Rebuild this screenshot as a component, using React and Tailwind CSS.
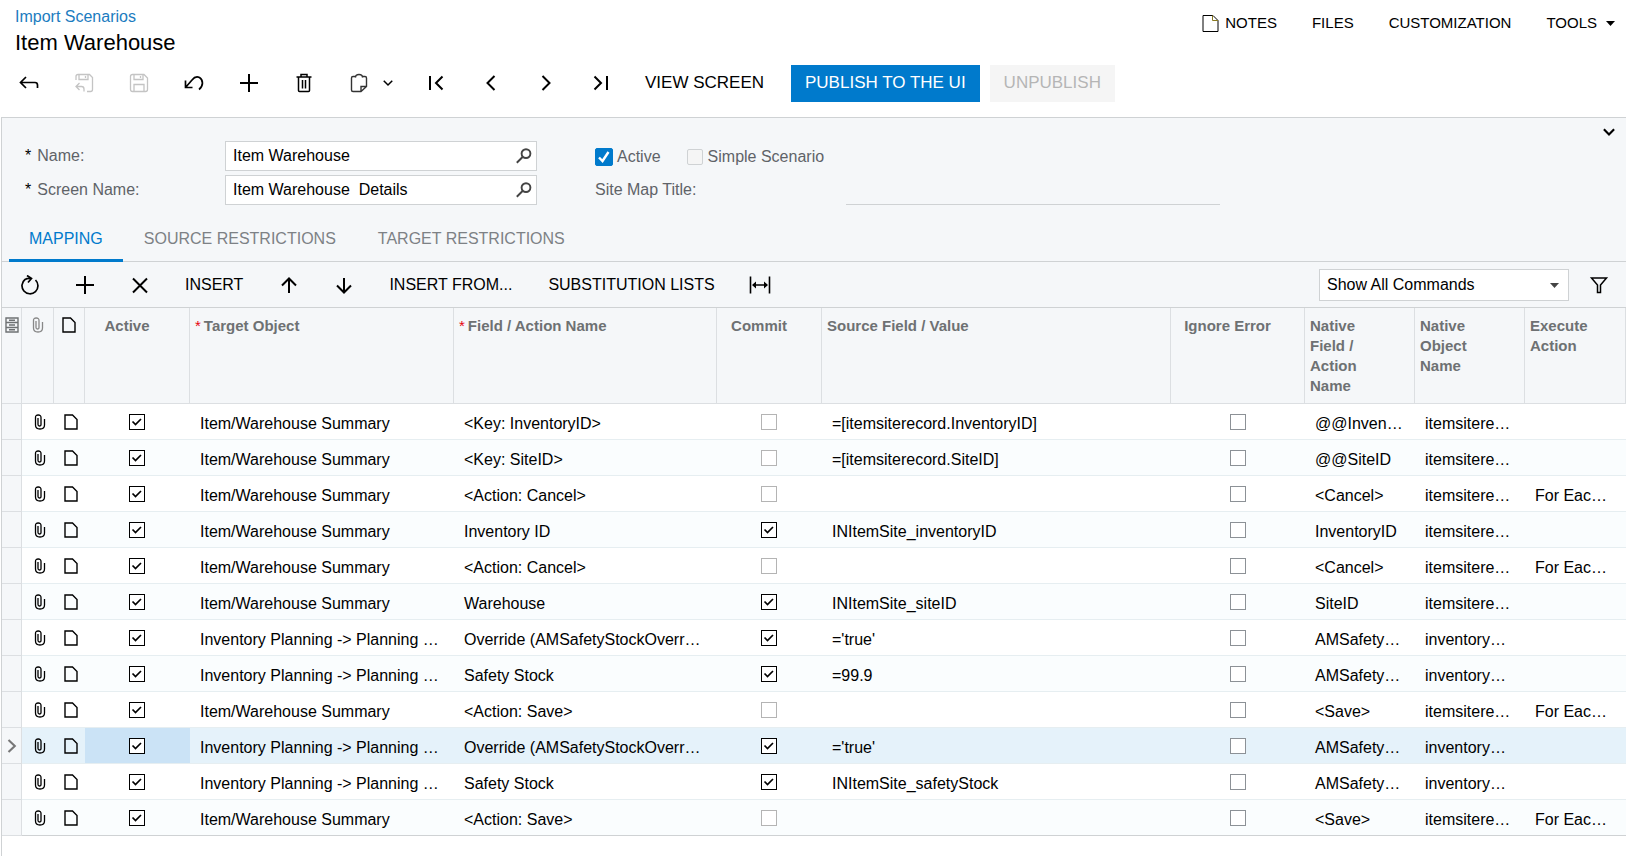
import React from 'react';

const columns = [
  { title: 'Target Object', required: true, width: 'w-[264px]' },
  { title: 'Field / Action Name', required: true, width: 'w-[263px]' },
  { title: 'Commit', center: true, width: 'w-[105px]' },
  { title: 'Source Field / Value', width: '' },
  { title: 'Ignore Error', center: true, width: 'w-[134px]' },
  { title: 'Native Field / Action Name', width: 'w-[110px]' },
  { title: 'Native Object Name', width: 'w-[110px]' },
  { title: 'Execute Action', width: 'w-[101px]' },
];

const summary = 'Item/Warehouse Summary';
const planning = 'Inventory Planning -> Planning …';
const override = 'Override (AMSafetyStockOverr…';

const rows = [
  { target: summary, field: '<Key: InventoryID>', source: '=[itemsiterecord.InventoryID]', native: '@@Inven…', object: 'itemsitere…' },
  { target: summary, field: '<Key: SiteID>', source: '=[itemsiterecord.SiteID]', native: '@@SiteID', object: 'itemsitere…' },
  { target: summary, field: '<Action: Cancel>', native: '<Cancel>', object: 'itemsitere…', execute: 'For Eac…' },
  { target: summary, field: 'Inventory ID', commit: true, source: 'INItemSite_inventoryID', native: 'InventoryID', object: 'itemsitere…' },
  { target: summary, field: '<Action: Cancel>', native: '<Cancel>', object: 'itemsitere…', execute: 'For Eac…' },
  { target: summary, field: 'Warehouse', commit: true, source: 'INItemSite_siteID', native: 'SiteID', object: 'itemsitere…' },
  { target: planning, field: override, commit: true, source: "='true'", native: 'AMSafety…', object: 'inventory…' },
  { target: planning, field: 'Safety Stock', commit: true, source: '=99.9', native: 'AMSafety…', object: 'inventory…' },
  { target: summary, field: '<Action: Save>', native: '<Save>', object: 'itemsitere…', execute: 'For Eac…' },
  { target: planning, field: override, commit: true, source: "='true'", native: 'AMSafety…', object: 'inventory…', selected: true },
  { target: planning, field: 'Safety Stock', commit: true, source: 'INItemSite_safetyStock', native: 'AMSafety…', object: 'inventory…' },
  { target: summary, field: '<Action: Save>', native: '<Save>', object: 'itemsitere…', execute: 'For Eac…' },
];

const Icon = ({ size = 20, stroke = 2, className = '', children }) => (
  <svg
    width={size}
    height={size}
    viewBox="0 0 20 20"
    fill="none"
    stroke="currentColor"
    strokeWidth={stroke}
    className={`shrink-0 ${className}`}
    aria-hidden="true"
  >
    {children}
  </svg>
);

const BackIcon = () => (
  <Icon stroke={1.7}>
    <path d="M7 4 1.5 9.5 7 15M1.5 9.5H16Q18.5 9.5 18.5 12V15" />
  </Icon>
);

const SaveBackIcon = () => (
  <Icon stroke={1.3}>
    <path d="M2 7V3.5Q2 1.5 4 1.5H15.5L18.5 4.5V16.5Q18.5 18.5 16.5 18.5H13M5 1.5V6.5H14V1.5M11.5 3V5" />
    <path d="M5.5 10 2 13.5 5.5 17M2 13.5H7.5Q10 13.5 10 16V18.5" />
  </Icon>
);

const SaveIcon = () => (
  <Icon stroke={1.3}>
    <path d="M1.5 3.5Q1.5 1.5 3.5 1.5H15L18.5 5V16.5Q18.5 18.5 16.5 18.5H3.5Q1.5 18.5 1.5 16.5ZM5 1.5V6.5H14V1.5M11.5 3V5M5 18.5V11.5H15V18.5" />
  </Icon>
);

const UndoIcon = () => (
  <Icon stroke={1.7}>
    <path d="M1.5 7.5V14.5H8.5M1.5 14.5 8 7Q11.5 2.5 15.5 4.5C19.5 7 19.5 13 15 16.5" />
  </Icon>
);

const PlusIcon = () => (
  <Icon>
    <path d="M10 1V19M1 10H19" />
  </Icon>
);

const TrashIcon = () => (
  <Icon stroke={1.5}>
    <path d="M2.5 4H17.5M7 4V1.5H13V4M4.5 4V17.5Q4.5 18.5 5.5 18.5H14.5Q15.5 18.5 15.5 17.5V4M8.5 7V15.5M11.5 7V15.5" />
  </Icon>
);

const ClipboardIcon = () => (
  <Icon stroke={1.4} className="text-[#333333]">
    <path d="M6.5 3.5H4Q2.5 3.5 2.5 5V17Q2.5 18.5 4 18.5H12L17.5 13.5V5Q17.5 3.5 16 3.5H13.5M12 18.5V13.5H17.5" />
    <path d="M6.5 4.5Q6.5 1.5 10 1.5T13.5 4.5" />
  </Icon>
);

const DownIcon = ({ size = 10, stroke = 3.6 }) => (
  <Icon size={size} stroke={stroke}>
    <path d="M1.5 5.5 10 14 18.5 5.5" />
  </Icon>
);

const FirstIcon = () => (
  <Icon>
    <path d="M4 3V17M16.5 3.5 10 10 16.5 16.5" />
  </Icon>
);

const PrevIcon = () => (
  <Icon>
    <path d="M13.5 3 6.5 10 13.5 17" />
  </Icon>
);

const NextIcon = () => (
  <Icon>
    <path d="M6.5 3 13.5 10 6.5 17" />
  </Icon>
);

const LastIcon = () => (
  <Icon>
    <path d="M3.5 3.5 10 10 3.5 16.5M16 3V17" />
  </Icon>
);

const RefreshIcon = () => (
  <Icon stroke={1.7}>
    <path d="M15.5 5A8 8 0 1 1 5 4.5Q7.500 3 11 3.5M7 0.5 11.500 3.5 8 7.5" />
  </Icon>
);

const CloseIcon = () => (
  <Icon>
    <path d="M3 3.5 17 17.5M17 3.5 3 17.5" />
  </Icon>
);

const UpIcon = () => (
  <Icon>
    <path d="M10 18V3.5M3 10.5 10 3.5 17 10.5" />
  </Icon>
);

const ArrowDownIcon = () => (
  <Icon>
    <path d="M10 3V17.5M3 10.5 10 17.5 17 10.5" />
  </Icon>
);

const FitIcon = () => (
  <svg width="22" height="20" viewBox="0 0 22 20" fill="none" stroke="currentColor" strokeWidth="1.6" aria-hidden="true">
    <path d="M1.5 1.5V18.5M20.5 1.5V18.5M4 10H18" />
    <path d="M3 10 7 6.5V13.5ZM19 10 15 6.5V13.5Z" fill="currentColor" stroke="none" />
  </svg>
);

const FilterIcon = () => (
  <Icon stroke={1.5}>
    <path d="M2.5 3H17.5L11.5 10V17.5H8.5V10Z" />
  </Icon>
);

const SearchIcon = () => (
  <Icon size={16} stroke={2.4}>
    <circle cx="12.5" cy="7" r="5.5" />
    <path d="M8.5 11 1 18.5" />
  </Icon>
);

const ClipIcon = ({ className }) => (
  <svg width="12" height="16" viewBox="0 0 12 16" fill="none" stroke="currentColor" strokeWidth="1.3" className={className} aria-hidden="true">
    <path d="M4 4V10.5Q4 12 5.5 12T7 10.5V3.5Q7 1 4.2 1T1.5 3.5V11Q1.5 15 6 15T10.5 11V5" />
  </svg>
);

const NoteIcon = () => (
  <svg width="14" height="16" viewBox="0 0 14 16" fill="none" stroke="currentColor" strokeWidth="1.4" aria-hidden="true">
    <path d="M1 1H8.5L13 5.5V15H1Z" />
  </svg>
);

const PageIcon = () => (
  <svg width="17" height="19" viewBox="0 0 17 19" fill="none" stroke="currentColor" strokeWidth="1" aria-hidden="true">
    <path d="M1 1.5H11L16 6.5V17.5H1Z" />
    <path d="M10.5 1.5V6.5H16" stroke="#8a7a20" />
  </svg>
);

const RowSettingsIcon = () => (
  <svg width="14" height="16" viewBox="0 0 14 16" fill="none" stroke="currentColor" strokeWidth="1.4" aria-hidden="true">
    <path d="M1 1H13V15H1ZM1 5.500H13M1 10.500H13M4 3.200H10M4 8H10M4 12.800H10" />
  </svg>
);

const IconButton = ({ label, disabled, children }) => (
  <button
    type="button"
    aria-label={label}
    disabled={disabled}
    className="flex h-9 w-[55px] items-center justify-center disabled:text-[#c4c4c4]"
  >
    {children}
  </button>
);

const TextButton = ({ children }) => (
  <button type="button" className="h-9 px-[18px] text-base whitespace-nowrap">
    {children}
  </button>
);

const GridCheck = ({ label, checked, light }) => (
  <span className="relative mx-auto block size-4">
    <input
      type="checkbox"
      aria-label={label}
      defaultChecked={checked}
      className={`peer block size-4 appearance-none border bg-white checked:border-black ${
        light ? 'border-[#b4b4b4]' : 'border-[#8c9196]'
      }`}
    />
    <svg
      viewBox="0 0 16 16"
      className="pointer-events-none absolute inset-0 hidden size-4 peer-checked:block"
      fill="none"
      stroke="black"
      strokeWidth="1.7"
      aria-hidden="true"
    >
      <path d="M3.5 7.5 6.5 10.5 12 5" />
    </svg>
  </span>
);

const LookupField = ({ id, label, value }) => (
  <div className="flex items-center">
    <label htmlFor={id} className="flex w-[200px] gap-[6px] text-[#5f6368]">
      <span className="text-black">*</span>
      {label}
    </label>
    <div className="flex h-[30px] w-[312px] items-center border border-[#cfd2d4] bg-white pr-1">
      <input id={id} defaultValue={value} className="h-full min-w-0 flex-1 px-[7px] outline-none" />
      <button type="button" aria-label={`Find ${label}`} className="text-[#444444]">
        <SearchIcon />
      </button>
    </div>
  </div>
);

const Header = () => (
  <header className="pb-[15px]">
    <div className="flex justify-between pt-[5px] pr-[11px] pl-[15px]">
      <div>
        <a href="#" className="block text-base leading-6 text-[#1b7cc0]">
          Import Scenarios
        </a>
        <h1 className="text-[22px] leading-7">Item Warehouse</h1>
      </div>
      <nav className="flex h-9 items-center gap-[35px] text-[15px]">
        <a href="#" className="flex items-center gap-[6px]">
          <PageIcon />
          NOTES
        </a>
        <a href="#">FILES</a>
        <a href="#">CUSTOMIZATION</a>
        <button type="button" className="flex items-center gap-[9px]">
          TOOLS
          <svg width="9" height="5" viewBox="0 0 9 5" aria-hidden="true">
            <path d="M0 0H9L4.5 5Z" />
          </svg>
        </button>
      </nav>
    </div>
    <div className="flex items-start pt-2 pl-px">
      <IconButton label="Back"><BackIcon /></IconButton>
      <IconButton label="Save and close" disabled><SaveBackIcon /></IconButton>
      <IconButton label="Save" disabled><SaveIcon /></IconButton>
      <IconButton label="Undo"><UndoIcon /></IconButton>
      <IconButton label="Add"><PlusIcon /></IconButton>
      <IconButton label="Delete"><TrashIcon /></IconButton>
      <button type="button" aria-label="Clipboard" className="flex h-9 w-[77px] items-center gap-[14px] pl-[18px]">
        <ClipboardIcon />
        <DownIcon stroke={3} />
      </button>
      <IconButton label="First"><FirstIcon /></IconButton>
      <IconButton label="Previous"><PrevIcon /></IconButton>
      <IconButton label="Next"><NextIcon /></IconButton>
      <IconButton label="Last"><LastIcon /></IconButton>
      <div className="flex gap-[10px] text-[17px]">
        <button type="button" className="h-[37px] w-[153px] pb-[2px]">VIEW SCREEN</button>
        <button type="button" className="h-[37px] bg-[#007acc] px-[14px] pb-[2px] text-white">PUBLISH TO THE UI</button>
        <button type="button" disabled className="h-[37px] bg-[#f5f5f5] px-[14px] pb-[2px] text-[#b5b5b5]">UNPUBLISH</button>
      </div>
    </div>
  </header>
);

const Summary = () => (
  <section className="relative flex gap-[58px] pt-[23px] pl-[23px]">
    <div className="flex flex-col gap-1">
      <LookupField id="name" label="Name:" value="Item Warehouse" />
      <LookupField id="screen" label="Screen Name:" value="Item Warehouse  Details" />
    </div>
    <div className="flex flex-col gap-1 text-[#5f6368]">
      <div className="flex h-[30px] items-center gap-[26px] pt-px">
        <label className="flex items-center gap-1">
          <span className="relative size-[18px]">
            <input type="checkbox" defaultChecked className="peer block size-[18px] appearance-none rounded-xs border border-[#cfd2d4] bg-white checked:border-[#007acc] checked:bg-[#007acc]" />
            <svg viewBox="0 0 18 18" className="pointer-events-none absolute inset-0 hidden size-[18px] peer-checked:block" fill="none" stroke="white" strokeWidth="2.4" aria-hidden="true">
              <path d="M4 9.5 7.5 13 13.5 4" />
            </svg>
          </span>
          Active
        </label>
        <label className="flex items-center gap-[5px]">
          <input type="checkbox" disabled className="size-4 appearance-none rounded-xs border border-[#cfd2d4] bg-[#f5f5f5]" />
          Simple Scenario
        </label>
      </div>
      <div className="flex h-[30px] items-center">
        <label htmlFor="site-map" className="w-[251px]">Site Map Title:</label>
        <input id="site-map" className="h-full w-[374px] border-b border-[#cfd2d4] bg-transparent outline-none" />
      </div>
    </div>
    <button type="button" aria-label="Collapse" className="absolute top-2 right-[11px]">
      <DownIcon size={12} />
    </button>
  </section>
);

const Tabs = () => (
  <div role="tablist" className="mt-[9px] flex h-12 border-b border-[#cfd2d4] pl-[7px] text-[#7d8185]">
    <button type="button" role="tab" aria-selected="true" className="-mb-px border-b-3 border-[#007acc] px-5 pt-1 text-[#007acc]">
      MAPPING
    </button>
    <button type="button" role="tab" aria-selected="false" className="px-[21px] pt-[2px]">SOURCE RESTRICTIONS</button>
    <button type="button" role="tab" aria-selected="false" className="px-[21px] pt-[2px]">TARGET RESTRICTIONS</button>
  </div>
);

const GridToolbar = () => (
  <div className="flex h-[46px] items-center border-b border-[#cfd2d4]">
    <IconButton label="Refresh"><RefreshIcon /></IconButton>
    <IconButton label="Add row"><PlusIcon /></IconButton>
    <IconButton label="Delete row"><CloseIcon /></IconButton>
    <TextButton>INSERT</TextButton>
    <IconButton label="Move up"><UpIcon /></IconButton>
    <IconButton label="Move down"><ArrowDownIcon /></IconButton>
    <TextButton>INSERT FROM...</TextButton>
    <TextButton>SUBSTITUTION LISTS</TextButton>
    <IconButton label="Fit to screen"><FitIcon /></IconButton>
    <div className="relative mr-[2px] ml-auto">
      <select aria-label="Commands" className="h-8 w-[250px] appearance-none border border-[#cfd2d4] bg-white px-[7px] outline-none">
        <option>Show All Commands</option>
      </select>
      <svg width="9" height="5" viewBox="0 0 9 5" className="pointer-events-none absolute top-[14px] right-[10px]" fill="#444444" aria-hidden="true">
        <path d="M0 0H9L4.5 5Z" />
      </svg>
    </div>
    <IconButton label="Filter"><FilterIcon /></IconButton>
  </div>
);

const headCell = 'h-24 border-r border-b border-[#dcdfe2] pt-2 align-top';
const cell = 'h-9 border-b border-[#e6eef1] group-last:border-[#cfd2d4]';
const textCell = `${cell} truncate pt-[5px] pl-[10px]`;

const Grid = () => (
  <table className="w-full table-fixed border-separate border-spacing-0">
    <thead className="text-left text-[15px] leading-5 font-bold text-[#6e7173]">
      <tr>
        <th className={`${headCell} w-5`}>
          <span className="flex justify-center pt-px"><RowSettingsIcon /></span>
        </th>
        <th className={`${headCell} w-8`}>
          <span className="flex justify-center pt-px"><ClipIcon className="text-[#888888]" /></span>
        </th>
        <th className={`${headCell} w-[31px]`}>
          <span className="flex justify-center pt-px text-black"><NoteIcon /></span>
        </th>
        <th className={`${headCell} w-[105px] pr-5 text-center`}>Active</th>
        {columns.map((col) => (
          <th key={col.title} className={`${headCell} ${col.width} ${col.center ? 'pr-5 text-center' : 'pr-6 pl-[5px]'}`}>
            {col.required && <span className="mr-[3px] font-normal text-red-600">*</span>}
            {col.title}
          </th>
        ))}
      </tr>
    </thead>
    <tbody className="text-base">
      {rows.map((row, i) => (
        <tr key={i} className={`group ${row.selected ? 'bg-[#e5f2fa]' : i % 2 ? 'bg-[#fafdfe]' : 'bg-white'}`}>
          <td className="h-9 border-r border-b border-[#dcdfe2] bg-[#f5f7f9] text-[#777777]">
            {row.selected && (
              <span className="flex justify-center">
                <Icon size={14} stroke={3}>
                  <path d="M5 1.5 14 10 5 18.5" />
                </Icon>
              </span>
            )}
          </td>
          <td className={cell}>
            <span className="flex justify-center pl-1"><ClipIcon /></span>
          </td>
          <td className={cell}>
            <span className="flex justify-center pl-[3px]"><NoteIcon /></span>
          </td>
          <td className={`${cell} pr-px ${row.selected ? 'bg-[#cbe3f6]' : ''}`}>
            <GridCheck label="Active" checked />
          </td>
          <td className={textCell}>{row.target}</td>
          <td className={textCell}>{row.field}</td>
          <td className={`${cell} pr-px`}>
            <GridCheck label="Commit" checked={row.commit} light />
          </td>
          <td className={textCell}>{row.source}</td>
          <td className={cell}>
            <GridCheck label="Ignore Error" />
          </td>
          <td className={textCell}>{row.native}</td>
          <td className={textCell}>{row.object}</td>
          <td className={textCell}>{row.execute}</td>
        </tr>
      ))}
    </tbody>
  </table>
);

export default function App() {
  return (
    <div className="flex min-h-screen flex-col bg-white font-['Liberation_Sans',Arial,sans-serif] text-base text-black">
      <Header />
      <main className="ml-px flex-1 border-t border-l border-[#cfd2d4]">
        <div className="bg-[#f5f7f9]">
          <Summary />
          <Tabs />
          <GridToolbar />
          <Grid />
        </div>
      </main>
    </div>
  );
}
